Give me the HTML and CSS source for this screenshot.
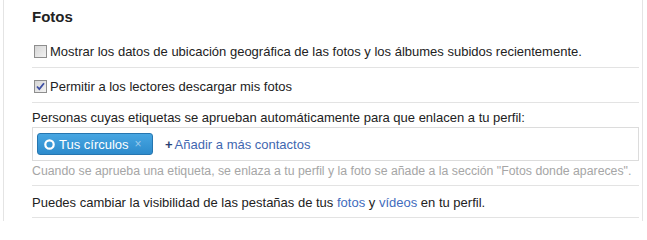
FILE: index.html
```html
<!DOCTYPE html>
<html lang="es">
<head>
<meta charset="utf-8">
<link rel="stylesheet" href="styles.css">
</head>
<body>
<div class="panel">
  <h2 class="title">Fotos</h2>
  <div class="row">
    <svg class="cb" width="13" height="13" viewBox="0 0 13 13"><defs><linearGradient id="g1" x1="0" y1="0" x2="1" y2="1"><stop offset="0" stop-color="#d4d4d4"/><stop offset="1" stop-color="#f4f4f4"/></linearGradient></defs><rect x="0.5" y="0.5" width="12" height="12" fill="url(#g1)" stroke="#8e8e8e"/></svg>
    <span>Mostrar los datos de ubicación geográfica de las fotos y los álbumes subidos recientemente.</span>
  </div>
  <div class="row">
    <svg class="cb" width="13" height="13" viewBox="0 0 13 13"><defs><linearGradient id="g2" x1="0" y1="0" x2="1" y2="1"><stop offset="0" stop-color="#d4d4d4"/><stop offset="1" stop-color="#f4f4f4"/></linearGradient></defs><rect x="0.5" y="0.5" width="12" height="12" fill="url(#g2)" stroke="#8e8e8e"/><path d="M3 6.5 L5.3 9 L10 3.2" fill="none" stroke="#3d4fa3" stroke-width="1.8"/></svg>
    <span>Permitir a los lectores descargar mis fotos</span>
  </div>
  <div class="block">
    <div class="label">Personas cuyas etiquetas se aprueban automáticamente para que enlacen a tu perfil:</div>
    <div class="input">
      <span class="chip"><svg class="ring" width="11" height="11" viewBox="0 0 11 11"><circle cx="5.5" cy="5.5" r="4.2" fill="none" stroke="#fff" stroke-width="2.2"/></svg><span class="chip-text">Tus círculos</span><span class="chip-x">×</span></span>
      <span class="add"><span class="plus">+</span>Añadir a más contactos</span>
    </div>
    <div class="hint">Cuando se aprueba una etiqueta, se enlaza a tu perfil y la foto se añade a la sección "Fotos donde apareces".</div>
  </div>
  <div class="row last">
    <span>Puedes cambiar la visibilidad de las pestañas de tus <a class="link" href="#">fotos</a> y <a class="link" href="#">vídeos</a> en tu perfil.</span>
  </div>
</div>
</body>
</html>
```

FILE: styles.css
```css
html, body {
  margin: 0;
  padding: 0;
  background: #fff;
}
body {
  font-family: "Liberation Sans", Arial, sans-serif;
  font-size: 13px;
  color: #222;
}
.panel {
  margin-left: 3px;
  width: 640px;
  height: 221px;
  box-sizing: border-box;
  border-left: 1px solid #e4e4e4;
  border-right: 1px solid #e4e4e4;
  padding: 0 3px 0 28px;
}
.title {
  margin: 0;
  padding: 8px 0 7px;
  font-size: 15px;
  line-height: 18px;
  font-weight: bold;
  color: #222;
}
.row {
  display: flex;
  align-items: center;
  gap: 3px;
  padding: 11px 0 8px 2px;
  line-height: 15px;
  border-bottom: 1px solid #e3e3e3;
}
.row.last {
  padding: 9px 0 7px;
}
.cb {
  flex: none;
  display: block;
}
.block {
  padding: 7px 0 7px;
  border-bottom: 1px solid #e3e3e3;
}
.label {
  line-height: 15px;
}
.input {
  margin-top: 2px;
  height: 32px;
  border: 1px solid #dcdcdc;
  display: flex;
  align-items: center;
  padding-left: 4px;
  gap: 12px;
}
.chip {
  display: flex;
  align-items: center;
  box-sizing: border-box;
  height: 22px;
  width: 116px;
  padding: 0 0 0 6px;
  border: 1px solid #2676b0;
  border-radius: 3px;
  background: linear-gradient(#47a6e2, #2d8bcc);
  color: #fff;
}
.ring {
  display: block;
  margin-right: 4px;
}
.chip-text {
  line-height: 15px;
}
.chip-x {
  margin-left: 6px;
  color: #9ccbec;
  font-size: 12px;
  line-height: 15px;
}
.add {
  color: #3f67b0;
  line-height: 15px;
}
.plus {
  color: #2b3f73;
  font-weight: bold;
  margin-right: 2px;
}
.hint {
  margin-top: 3px;
  font-size: 12.3px;
  line-height: 14px;
  color: #a6a6a6;
}
.link {
  color: #3f6cbd;
  text-decoration: none;
}
```
